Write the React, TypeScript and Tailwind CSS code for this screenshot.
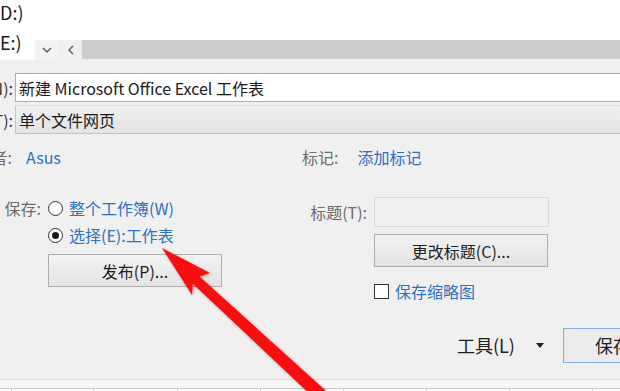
const labelCut = 'flex shrink-0 justify-end overflow-hidden whitespace-nowrap';

function Radio({ checked }: { checked?: boolean }) {
    return (
        <span className="flex h-[15px] w-[15px] shrink-0 items-center justify-center rounded-full border border-[#333] bg-white">
            {checked && <span className="h-[7px] w-[7px] rounded-full bg-[#1a1a1a]" />}
        </span>
    );
}

function Button({ children, className }: { children: React.ReactNode; className?: string }) {
    return (
        <div
            className={`flex h-[33px] w-[174px] shrink-0 items-center justify-center border border-[#adadad] bg-gradient-to-b from-[#f2f2f2] to-[#e4e4e4] text-[#1e1e1e] ${className ?? ''}`}
        >
            {children}
        </div>
    );
}

const dividers = [12, 82, 84, 83, 83, 83, 83, 83, 40];

export default function App() {
    return (
        <div className="relative h-[391px] w-[620px] overflow-hidden bg-[#f0f0f0] font-['Noto_Sans_CJK_SC','Noto_Sans',sans-serif] text-[16px] text-[#1e1e1e]">
            {/* nav pane + scrollbar */}
            <div className="flex h-[60px]">
                <div className="w-[35px] shrink-0 overflow-hidden bg-white text-[18px] leading-[30px] whitespace-nowrap text-[#1a1a1a]">
                    <div className="-mt-[3px]">D:)</div>
                    <div>E:)</div>
                </div>
                <div className="flex flex-1 flex-col">
                    <div className="h-[40px] bg-white" />
                    <div className="flex h-[20px]">
                        <div className="flex w-[23px] items-center justify-center bg-[#f3f3f3]">
                            <svg width="10" height="6" viewBox="0 0 10 6">
                                <path d="M1 1 L5 5 L9 1" fill="none" stroke="#555" strokeWidth="1.4" />
                            </svg>
                        </div>
                        <div className="flex w-[24px] items-center justify-center">
                            <svg width="7" height="10" viewBox="0 0 7 10">
                                <path d="M6 1 L2 5 L6 9" fill="none" stroke="#555" strokeWidth="1.4" />
                            </svg>
                        </div>
                        <div className="mb-[1px] flex-1 bg-[#cdcdcd]" />
                    </div>
                </div>
            </div>

            {/* file name */}
            <div className="mt-[13px] flex h-[29px] items-center">
                <div className={`${labelCut} w-[15px] pr-[2px] text-[#333]`}>文件名(N):</div>
                <div className="-mr-[20px] flex h-full flex-1 items-center border border-[#adadad] bg-white pl-[3px] whitespace-nowrap text-[#1a1a1a]">
                    新建 Microsoft Office Excel 工作表
                </div>
            </div>

            {/* save type */}
            <div className="mt-[3px] flex h-[29px] items-center">
                <div className={`${labelCut} w-[15px] pr-[2px] text-[#333]`}>保存类型(T):</div>
                <div className="-mr-[20px] flex h-full flex-1 items-center border border-[#c4c4c4] border-t-[#dcdcdc] bg-gradient-to-b from-[#efefef] to-[#e5e5e5] pl-[3px] text-[#1a1a1a]">
                    单个文件网页
                </div>
            </div>

            <div className="mt-[13px] flex">
                {/* left column */}
                <div className="w-[302px] shrink-0">
                    <div className="flex h-[20px] items-center">
                        <div className={`${labelCut} w-[13px] pr-[1px] text-[#6d6d6d]`}>作者:</div>
                        <span className="ml-[13px] text-[#2a73c2]">Asus</span>
                    </div>
                    <div className="mt-[31px] flex h-[20px] items-center">
                        <div className="w-[48px] shrink-0 pr-[7px] text-right text-[#6d6d6d]">保存:</div>
                        <Radio />
                        <span className="ml-[6px] text-[#2a73c2]">整个工作簿(W)</span>
                    </div>
                    <div className="mt-[7px] flex h-[20px] items-center pl-[48px]">
                        <Radio checked />
                        <span className="ml-[6px] text-[#2a73c2]">选择(E):工作表</span>
                    </div>
                    <Button className="mt-[9px] ml-[48px]">发布(P)...</Button>
                </div>

                {/* right column */}
                <div className="flex-1">
                    <div className="flex h-[20px] items-center">
                        <span className="text-[#6d6d6d]">标记:</span>
                        <span className="ml-[19px] text-[#2a73c2]">添加标记</span>
                    </div>
                    <div className="mt-[30px] flex h-[30px] items-center">
                        <div className="w-[72px] shrink-0 pr-[7px] text-right text-[#6d6d6d]">标题(T):</div>
                        <div className="h-full w-[175px] border border-[#d9d9d9] bg-[#f0f0f0]" />
                    </div>
                    <Button className="mt-[7px] ml-[72px]">更改标题(C)...</Button>
                    <div className="mt-[14px] ml-[72px] flex h-[20px] items-center">
                        <span className="h-[15px] w-[15px] shrink-0 border border-[#333] bg-white" />
                        <span className="ml-[6px] text-[#2a73c2]">保存缩略图</span>
                    </div>
                </div>
            </div>

            {/* tools + save */}
            <div className="mt-[27px] flex h-[35px] items-center pl-[457px] text-[18px]">
                <span className="whitespace-nowrap text-[#1e1e1e]">工具(L)</span>
                <svg className="ml-[21px] shrink-0" width="8" height="5" viewBox="0 0 8 5">
                    <path d="M0 0 H8 L4 5 Z" fill="#1e1e1e" />
                </svg>
                <div className="ml-[19px] flex h-full w-[80px] shrink-0 items-center border border-[#7fb0e3] bg-[#ececec] pl-[31px] whitespace-nowrap text-[#1e1e1e]">
                    保存
                </div>
            </div>

            {/* status strip */}
            <div className="mt-[16px] border-t border-[#dadada]">
                <div className="h-[8px] bg-[#f7f7f7]" />
                <div className="flex h-[4px] border-t border-[#c9c9c9] bg-white">
                    {dividers.map((w, i) => (
                        <div key={i} className="shrink-0 border-r border-[#c9c9c9]" style={{ width: w }} />
                    ))}
                </div>
            </div>

            {/* red annotation arrow */}
            <svg className="pointer-events-none absolute inset-0" width="620" height="391" viewBox="0 0 620 391">
                <defs>
                    <filter id="sh" x="-20%" y="-20%" width="140%" height="140%">
                        <feDropShadow dx="1" dy="1" stdDeviation="1.5" floodColor="#000" floodOpacity="0.35" />
                    </filter>
                </defs>
                <polygon
                    points="162,248 210,273 199.5,276.5 344.8,407.9 335.2,418.1 192.8,283.7 192,295"
                    fill="#fb0f0f"
                    filter="url(#sh)"
                />
            </svg>
        </div>
    );
}
